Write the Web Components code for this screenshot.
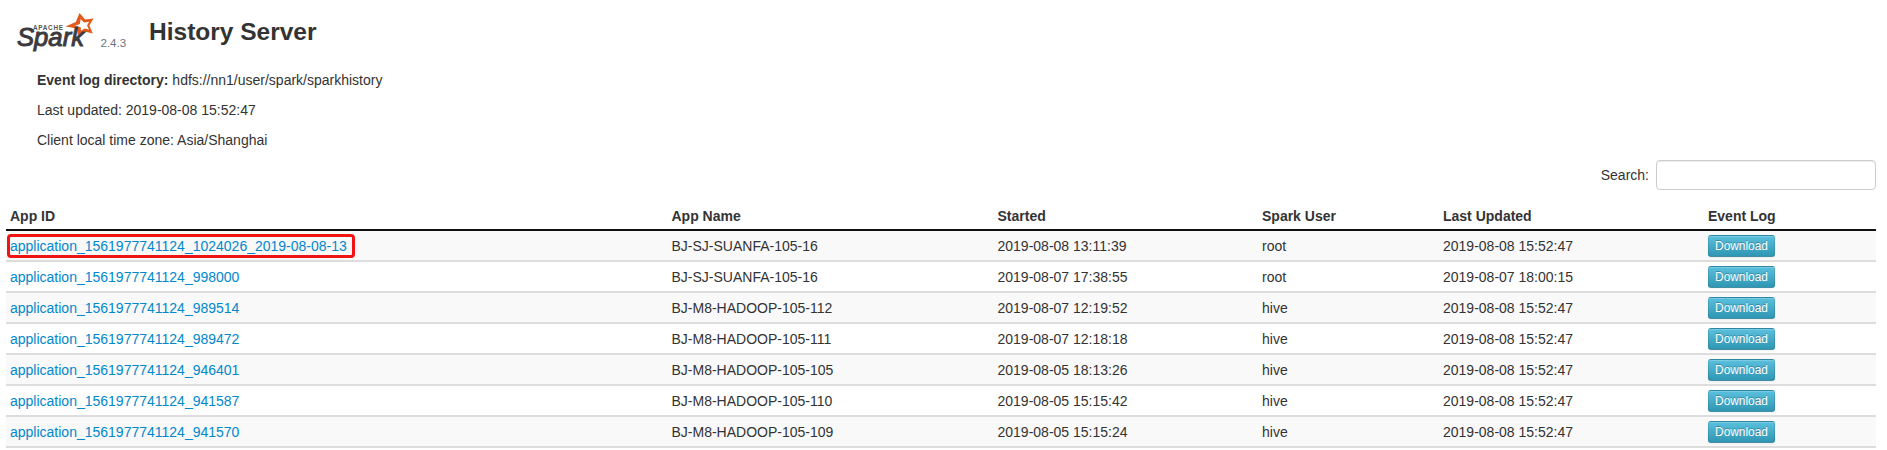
<!DOCTYPE html>
<html><head><meta charset="utf-8"><title>History Server</title>
<style>html,body{margin:0;padding:0;background:#fff}body{font:14px/20px "Liberation Sans",Arial,sans-serif;color:#333;overflow:hidden}</style>
</head><body>
<hs-page>
  <hs-header version="2.4.3" title="History Server"></hs-header>
  <hs-info>
    <p><strong>Event log directory:</strong> hdfs://nn1/user/spark/sparkhistory</p>
    <p>Last updated: 2019-08-08 15:52:47</p>
    <p>Client local time zone: Asia/Shanghai</p>
  </hs-info>
  <hs-search></hs-search>
  <hs-table></hs-table>
</hs-page>
<script>
function def(name, html, init){
  customElements.define(name, class extends HTMLElement{
    connectedCallback(){
      if(this.shadowRoot) return;
      const r=this.attachShadow({mode:'open'});
      r.innerHTML=typeof html==='function'?html(this):html;
      if(init) init(r,this);
    }
  });
}
def('hs-page','<style>:host{display:block;padding:0 11px 0 6px}</style><slot></slot>');
def('spark-logo',`<style>:host{display:block;width:80px;height:42px}svg{display:block;overflow:visible}</style>
<svg width="80" height="42" viewBox="0 0 80 42">
<path d="M63.5 2 L69.2 8.6 L77.5 7.6 L73.4 14.6 L76.8 22.6 L68.6 20.4 L61.8 24.2 L61 17.6 L49.5 15.6 L59.8 11 Z M64.6 8 L63.9 12.9 L58.6 15 L64.6 16 L65 19.7 L68.6 17.5 L73 18.6 L71 14.4 L73.2 10.8 L68 11.6 Z" fill="#e25a1c" fill-rule="evenodd"/>
<text x="17" y="19" font-family="Liberation Sans" font-size="6.4" font-weight="700" fill="#555" textLength="30">APACHE</text>
<text x="1" y="35" font-family="Liberation Sans" font-size="26" font-style="italic" fill="#3c3a3e" stroke="#3c3a3e" stroke-width="1" textLength="67" lengthAdjust="spacingAndGlyphs">Spark</text>
</svg>`);
def('hs-header',h=>`<style>:host{display:flex;align-items:flex-start;height:70px;padding-left:10px}
.v{font-size:11.5px;color:#6b7380;line-height:14px;margin:36px 0 0 4.5px;width:48.5px;flex:none}
spark-logo{margin-top:11px;flex:none}
h3{margin:17px 0 0;font:700 24.5px/30px "Liberation Sans",Arial,sans-serif;color:#333}</style>
<spark-logo></spark-logo><span class="v">${h.getAttribute('version')}</span><h3>${h.getAttribute('title')}</h3>`);
def('hs-info',`<style>:host{display:block;padding-left:31px}
::slotted(p){margin:0 0 10px;line-height:20px}
</style><slot></slot>`);
def('hs-search',`<style>:host{display:flex;justify-content:flex-end;align-items:center;gap:7px;margin-top:5px;height:29px;font-size:14px}
input{box-sizing:border-box;width:220px;height:30px;margin:0;border:1px solid #ccc;border-radius:4px;background:#fff;box-shadow:inset 0 1px 1px rgba(0,0,0,.075);font:inherit;padding:4px 6px}
</style><label for="q">Search:</label><input id="q" type="text">`);
def('hs-download',`<style>:host{display:inline-block;vertical-align:top}
a{display:block;box-sizing:border-box;width:67px;height:22px;border:1px solid #2f96b4;border-color:rgba(0,0,0,.1) rgba(0,0,0,.1) rgba(0,0,0,.25);border-radius:3px;background:linear-gradient(#5bc0de,#2f96b4);color:#fff;font-size:11.9px;line-height:20px;text-align:center;text-shadow:0 -1px 0 rgba(0,0,0,.25);box-shadow:inset 0 1px 0 rgba(255,255,255,.2),0 1px 2px rgba(0,0,0,.05)}
</style><a>Download</a>`);
const rows=[
["application_1561977741124_1024026_2019-08-08-13","BJ-SJ-SUANFA-105-16","2019-08-08 13:11:39","root","2019-08-08 15:52:47"],
["application_1561977741124_998000","BJ-SJ-SUANFA-105-16","2019-08-07 17:38:55","root","2019-08-07 18:00:15"],
["application_1561977741124_989514","BJ-M8-HADOOP-105-112","2019-08-07 12:19:52","hive","2019-08-08 15:52:47"],
["application_1561977741124_989472","BJ-M8-HADOOP-105-111","2019-08-07 12:18:18","hive","2019-08-08 15:52:47"],
["application_1561977741124_946401","BJ-M8-HADOOP-105-105","2019-08-05 18:13:26","hive","2019-08-08 15:52:47"],
["application_1561977741124_941587","BJ-M8-HADOOP-105-110","2019-08-05 15:15:42","hive","2019-08-08 15:52:47"],
["application_1561977741124_941570","BJ-M8-HADOOP-105-109","2019-08-05 15:15:24","hive","2019-08-08 15:52:47"]];
def('hs-table',()=>`<style>:host{display:block;margin-top:12px}
table{width:1870px;table-layout:fixed;border-collapse:collapse;border-spacing:0}
th{height:29px;box-sizing:border-box;padding:0 4px 3px;text-align:left;vertical-align:bottom;font-weight:700;line-height:20px;border-bottom:2px solid #111}
td{height:31px;box-sizing:border-box;padding:0 4px;vertical-align:middle;line-height:20px;border-bottom:2px solid #ddd;white-space:nowrap}
tbody tr:nth-child(odd) td{background:#f9f9f9}
a{color:#08c;text-decoration:none}
.idc{position:relative}
.mark{position:absolute;left:1px;top:3px;width:348px;height:24px;box-sizing:border-box;border:3px solid #f01414;border-radius:4px}
</style>
<table><colgroup><col style="width:661.5px"><col style="width:326px"><col style="width:264.5px"><col style="width:181px"><col style="width:265px"><col></colgroup>
<thead><tr><th>App ID</th><th>App Name</th><th>Started</th><th>Spark User</th><th>Last Updated</th><th>Event Log</th></tr></thead>
<tbody>${rows.map((r,i)=>`<tr><td class="idc">${i==0?'<span class="mark"></span>':''}<a>${r[0]}</a></td><td>${r[1]}</td><td>${r[2]}</td><td>${r[3]}</td><td>${r[4]}</td><td><hs-download></hs-download></td></tr>`).join('')}</tbody></table>`);
</script>
</body></html>
